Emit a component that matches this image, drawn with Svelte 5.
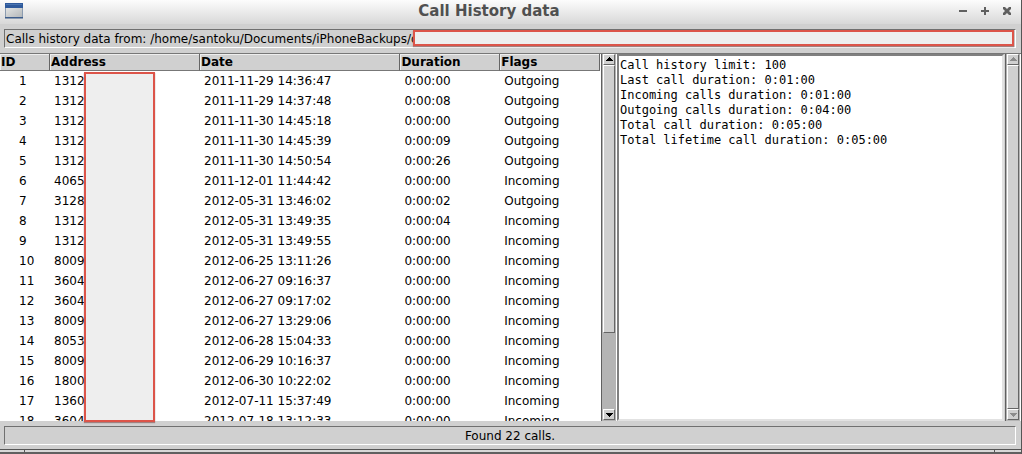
<script>
  const calls = [
    [1, '1312', '2011-11-29 14:36:47', '0:00:00', 'Outgoing'],
    [2, '1312', '2011-11-29 14:37:48', '0:00:08', 'Outgoing'],
    [3, '1312', '2011-11-30 14:45:18', '0:00:00', 'Outgoing'],
    [4, '1312', '2011-11-30 14:45:39', '0:00:09', 'Outgoing'],
    [5, '1312', '2011-11-30 14:50:54', '0:00:26', 'Outgoing'],
    [6, '4065', '2011-12-01 11:44:42', '0:00:00', 'Incoming'],
    [7, '3128', '2012-05-31 13:46:02', '0:00:02', 'Outgoing'],
    [8, '1312', '2012-05-31 13:49:35', '0:00:04', 'Incoming'],
    [9, '1312', '2012-05-31 13:49:55', '0:00:00', 'Incoming'],
    [10, '8009', '2012-06-25 13:11:26', '0:00:00', 'Incoming'],
    [11, '3604', '2012-06-27 09:16:37', '0:00:00', 'Incoming'],
    [12, '3604', '2012-06-27 09:17:02', '0:00:00', 'Incoming'],
    [13, '8009', '2012-06-27 13:29:06', '0:00:00', 'Incoming'],
    [14, '8053', '2012-06-28 15:04:33', '0:00:00', 'Incoming'],
    [15, '8009', '2012-06-29 10:16:37', '0:00:00', 'Incoming'],
    [16, '1800', '2012-06-30 10:22:02', '0:00:00', 'Incoming'],
    [17, '1360', '2012-07-11 15:37:49', '0:00:00', 'Incoming'],
    [18, '3604', '2012-07-18 13:12:33', '0:00:00', 'Incoming']
  ];

  const summary = [
    'Call history limit: 100',
    'Last call duration: 0:01:00',
    'Incoming calls duration: 0:01:00',
    'Outgoing calls duration: 0:04:00',
    'Total call duration: 0:05:00',
    'Total lifetime call duration: 0:05:00'
  ].join('\n');
</script>

{#snippet scrollbar(name, disabled, size)}
  <div class="scrollbar" class:disabled>
    <button type="button" aria-label="Scroll {name} up" {disabled}>
      <svg viewBox="0 0 11 9" width="11" height="9" shape-rendering="crispEdges"><path d="M5 2h1v1h1v1h1v1h1v1H2V5h1V4h1V3h1z" /></svg>
    </button>
    <div class="trough"><div class="thumb" style="height: {size}%"></div></div>
    <button type="button" aria-label="Scroll {name} down" {disabled}>
      <svg viewBox="0 0 11 9" width="11" height="9" shape-rendering="crispEdges"><path d="M2 3h7v1H8v1H7v1H6v1H5V6H4V5H3V4H2z" /></svg>
    </button>
  </div>
{/snippet}

<div class="window">
  <header>
    <svg class="app-icon" viewBox="0 0 18 17" width="18" height="17" aria-hidden="true">
      <defs>
        <linearGradient id="pane" x1="0" y1="0" x2="1" y2="1">
          <stop offset="0" stop-color="#e2e4e4" />
          <stop offset="1" stop-color="#b4b8ba" />
        </linearGradient>
      </defs>
      <path d="M0 0h18v16H0z" fill="#8c9cb0" />
      <path d="M0 0h18v5H0z" fill="#2f5a9c" />
      <path d="M1 1h16v1H1z" fill="#4a74b0" />
      <path d="M1 5h16v9H1z" fill="url(#pane)" />
      <path d="M0 14h18v1H0z" fill="#3c5c8c" />
    </svg>
    <h1>Call History data</h1>
    <div class="controls">
      <button type="button" aria-label="Minimize"><svg viewBox="0 0 8 8" width="8" height="8"><path d="M0 3h8v2H0z" /></svg></button>
      <button type="button" aria-label="Maximize"><svg viewBox="0 0 8 8" width="8" height="8"><path d="M3 0h2v3h3v2H5v3H3V5H0V3h3z" /></svg></button>
      <button type="button" aria-label="Close"><svg viewBox="0 0 8 8" width="8" height="8"><path d="M0 0h2l2 2 2-2h2v2L6 4l2 2v2H6L4 6 2 8H0V6l2-2-2-2z" /></svg></button>
    </div>
  </header>

  <div class="path sunken">
    Calls history data from: /home/santoku/Documents/iPhoneBackups/d
    <span class="mask"></span>
  </div>

  <main>
    <section class="list">
      <div class="table-view">
        <table>
          <colgroup><col class="id" /><col class="address" /><col class="date" /><col class="short" /><col class="short" /></colgroup>
          <thead>
            <tr><th>ID</th><th>Address</th><th>Date</th><th>Duration</th><th>Flags</th></tr>
          </thead>
          <tbody>
            {#each calls as call}
              <tr>{#each call as value}<td>{value}</td>{/each}</tr>
            {/each}
          </tbody>
        </table>
      </div>
      {@render scrollbar('calls', false, 78)}
      <span class="mask"></span>
    </section>
    <section class="details">
      <textarea readonly aria-label="Call summary" value={summary}></textarea>
      {@render scrollbar('summary', true, 100)}
    </section>
  </main>

  <footer class="sunken">Found 22 calls.</footer>
  <div class="grip"></div>
</div>

<style>
  :global(body) {
    margin: 0;
  }

  .window {
    box-sizing: border-box;
    height: 100vh;
    display: flex;
    flex-direction: column;
    border-right: 1px solid #555;
    background: #d0d0d0;
    color: #000;
    font: 12px/16px 'DejaVu Sans', sans-serif;
  }

  header {
    flex: none;
    height: 24px;
    display: grid;
    grid-template-columns: 1fr auto 1fr;
    align-items: center;
    padding: 0 10px 2px 5px;
    box-sizing: border-box;
    background: linear-gradient(#fcfcfc, #d8d8d8);
  }

  .app-icon {
    display: block;
  }

  h1 {
    margin: 0;
    padding-right: 38px;
    color: #505050;
    font-size: 15px;
    line-height: 20px;
  }

  .controls {
    display: flex;
    justify-content: flex-end;
    gap: 14px;
  }

  button {
    display: grid;
    place-items: center;
    margin: 0;
    padding: 0;
    border: 0;
    background: none;
  }

  .controls svg {
    display: block;
    fill: #606060;
  }

  .sunken {
    position: relative;
    flex: none;
    box-sizing: border-box;
    height: 19px;
    border: 1px solid;
    border-color: #707070 #fff #fff #707070;
    line-height: 18px;
  }

  .path {
    margin: 5px 5px 5px 4px;
    padding-left: 1px;
    white-space: nowrap;
  }

  .mask {
    position: absolute;
    box-sizing: border-box;
    border: 2px solid #dc5449;
    background: #eee;
    box-shadow: 0 1px 1px #a08080;
  }

  .path .mask {
    inset: 0 1px 1px 408px;
  }

  main {
    flex: 1;
    min-height: 0;
    display: flex;
    border-top: 1px solid #777;
  }

  .list {
    position: relative;
    flex: 617 1 0;
    min-width: 0;
    display: flex;
  }

  .list .mask {
    top: 18px;
    bottom: -1px;
    left: 84px;
    width: 71px;
  }

  .table-view {
    flex: 1;
    min-width: 0;
    overflow: hidden;
    padding-right: 1px;
    background: #fff;
  }

  table {
    width: 100%;
    table-layout: fixed;
    border-collapse: separate;
    border-spacing: 0;
  }

  .id {
    width: 50px;
  }

  .address {
    width: 25%;
  }

  .date {
    width: 33.4%;
  }

  th {
    box-sizing: border-box;
    height: 17px;
    padding: 1px 0 0 1px;
    border-right: 1px solid #666;
    border-bottom: 1px solid #777;
    box-shadow: inset 1px 1px #eee;
    background: #d0d0d0;
    text-align: left;
    line-height: 15px;
  }

  td {
    height: 20px;
    padding: 0 0 0 4px;
    line-height: 20px;
  }

  td:first-child {
    padding-left: 19px;
  }

  .scrollbar {
    flex: none;
    box-sizing: border-box;
    width: 16px;
    display: flex;
    flex-direction: column;
    padding: 0 1px 1px;
    border-left: 1px solid #606060;
    border-right: 1px solid #fff;
    background: #b4b4b4;
  }

  .scrollbar button,
  .thumb {
    box-sizing: border-box;
    border: 1px solid;
    border-color: #fff #666 #666 #fff;
    background: #d0d0d0;
  }

  .scrollbar button {
    flex: none;
    width: 100%;
    height: 11px;
  }

  .scrollbar svg {
    display: block;
    fill: #000;
  }

  .disabled svg {
    fill: #8c8c8c;
  }

  .trough {
    flex: 1;
    min-height: 0;
  }

  .details {
    flex: 404 1 0;
    min-width: 0;
    display: flex;
  }

  textarea {
    flex: 1;
    min-width: 0;
    box-sizing: border-box;
    margin: 0 1px 0 0;
    padding: 2px 1px;
    border: 2px solid;
    border-color: #808080 #e2e2e2 #e2e2e2 #808080;
    border-radius: 0;
    outline: 0;
    resize: none;
    background: #fff;
    color: #000;
    font: 12px/15px 'DejaVu Sans Mono', monospace;
  }

  footer {
    margin: 5px 5px 4px 4px;
    text-align: center;
  }

  .grip {
    flex: none;
    height: 5px;
    box-sizing: border-box;
    border-top: 1px solid #555;
    border-bottom: 2px solid #606060;
    background: linear-gradient(#555, #555) 24px 0 / 1px 100% no-repeat,
      linear-gradient(#555, #555) calc(100% - 26px) 0 / 1px 100% no-repeat, #d8d8d8;
  }
</style>
